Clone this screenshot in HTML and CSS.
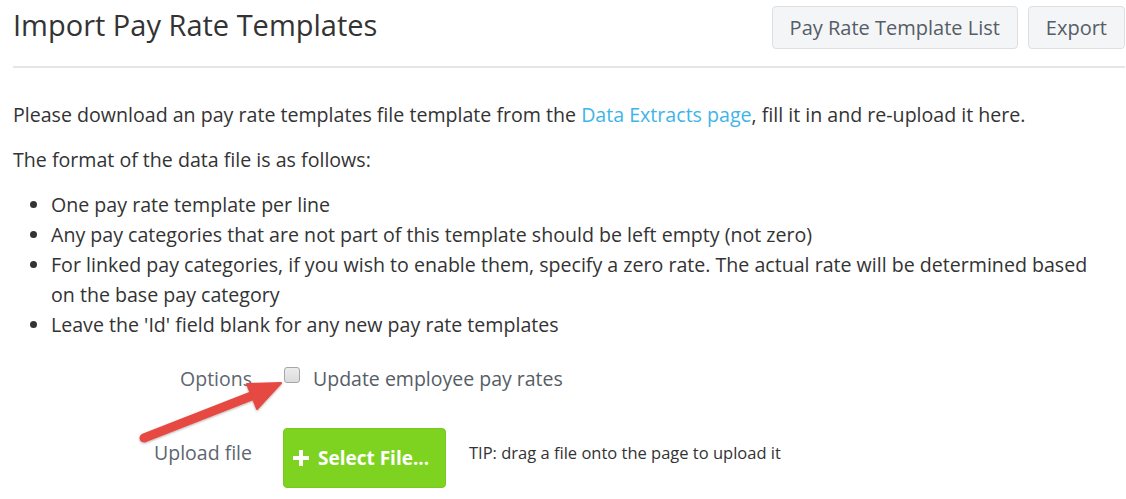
FILE: index.html
```html
<!DOCTYPE html>
<html>
<head>
<meta charset="utf-8">
<link rel="stylesheet" href="styles.css">
</head>
<body>
<div class="page">
  <header class="header">
    <h1 class="title">Import Pay Rate Templates</h1>
    <div class="actions">
      <button class="btn">Pay Rate Template List</button>
      <button class="btn">Export</button>
    </div>
  </header>
  <hr class="divider">
  <p class="intro">Please download an pay rate templates file template from the <a class="link" href="#">Data Extracts page</a>, fill it in and re-upload it here.</p>
  <p class="intro">The format of the data file is as follows:</p>
  <ul class="rules">
    <li>One pay rate template per line</li>
    <li>Any pay categories that are not part of this template should be left empty (not zero)</li>
    <li>For linked pay categories, if you wish to enable them, specify a zero rate. The actual rate will be determined based on the base pay category</li>
    <li>Leave the 'Id' field blank for any new pay rate templates</li>
  </ul>
  <div class="form">
    <div class="row row-options">
      <span class="label">Options</span>
      <label class="check"><span class="box"></span>Update employee pay rates</label>
    </div>
    <div class="row row-upload">
      <span class="label">Upload file</span>
      <button class="upload"><svg class="plus" width="16" height="16" viewBox="0 0 16 16"><path d="M6 0h4v6h6v4h-6v6h-4v-6h-6v-4h6z" fill="#fff"/></svg>Select File...</button>
      <span class="tip">TIP: drag a file onto the page to upload it</span>
    </div>
  </div>
  <svg class="arrow" width="160" height="80" viewBox="0 0 160 80">
    <defs>
      <filter id="sh" x="-20%" y="-20%" width="140%" height="140%">
        <feDropShadow dx="0" dy="1" stdDeviation="1.2" flood-color="#000" flood-opacity="0.3"/>
      </filter>
    </defs>
    <g filter="url(#sh)" fill="#e64a43" stroke="#e64a43">
      <line x1="8" y1="67" x2="118" y2="24" stroke-width="9" stroke-linecap="round"/>
      <polygon points="145,12 111,13 121,38" stroke-width="2" stroke-linejoin="round"/>
    </g>
  </svg>
</div>
</body>
</html>
```
FILE: styles.css
```css
* { box-sizing: border-box; }
html, body { margin: 0; padding: 0; background: #fff; }
body {
  font-family: "Open Sans", "Liberation Sans", sans-serif;
  color: #333;
}
.page {
  position: relative;
  padding: 0 1px 0 13px;
}
.header {
  display: flex;
  justify-content: space-between;
  align-items: flex-start;
  height: 66px;
}
.title {
  margin: 6px 0 0;
  font-size: 29px;
  font-weight: 400;
  color: #333;
  line-height: 38px;
}
.actions {
  display: flex;
  gap: 10px;
  padding-top: 6px;
}
.btn {
  height: 43px;
  padding: 0 17px;
  font-family: inherit;
  font-size: 20px;
  color: #555d66;
  background: #f4f5f7;
  border: 1px solid #dcdfe3;
  border-radius: 4px;
}
.divider {
  margin: 0;
  border: 0;
  border-top: 2px solid #e6e6e6;
}
.intro {
  margin: 34px 0 0;
  font-size: 19.6px;
  line-height: 26px;
}
.intro + .intro { margin-top: 19px; }
.link { color: #3fb4e8; text-decoration: none; }
.rules {
  margin: 17px 0 0;
  padding: 0 22px 0 38px;
  font-size: 19.6px;
  line-height: 30px;
}
.form { margin-top: 18px; }
.row {
  display: flex;
  align-items: center;
}
.label {
  width: 239px;
  text-align: right;
  font-size: 19.5px;
  color: #5d6670;
}
.row-options { height: 40px; }
.check {
  display: flex;
  align-items: center;
  margin-left: 32px;
  font-size: 19.5px;
  color: #555d66;
}
.box {
  width: 16px;
  height: 16px;
  margin-right: 13px;
  margin-top: -7px;
  border: 1px solid #a6a6a6;
  border-radius: 3px;
  background: linear-gradient(#ececec, #dcdcdc);
}
.row-upload { margin-top: 30px; }
.row-upload .label,
.row-upload .tip { margin-bottom: 12px; }
.upload {
  display: flex;
  align-items: center;
  gap: 9px;
  margin-left: 31px;
  width: 163px;
  height: 60px;
  padding: 0 0 0 9px;
  font-family: inherit;
  font-size: 19px;
  font-weight: 700;
  color: #fff;
  background: #7ed321;
  border: 1px solid #78c91f;
  border-radius: 4px;
}
.tip {
  margin-left: 23px;
  font-size: 16.5px;
  color: #333;
}
.arrow {
  position: absolute;
  left: 136px;
  top: 371px;
}
```
